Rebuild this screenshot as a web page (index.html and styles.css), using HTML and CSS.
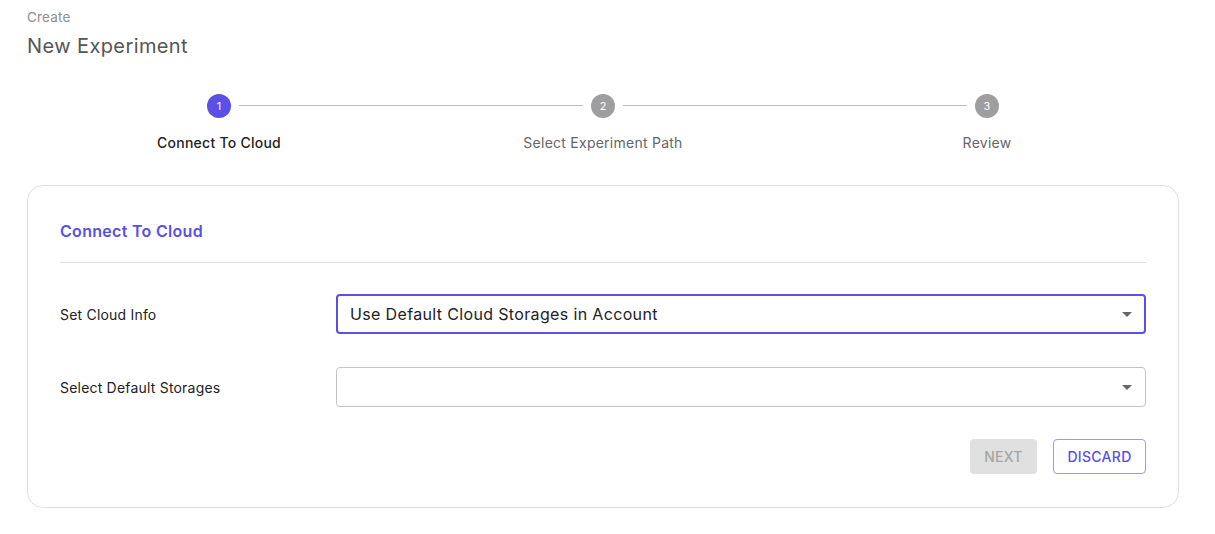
FILE: index.html
```html
<!DOCTYPE html>
<html lang="en">
<head>
<meta charset="utf-8">
<title>New Experiment</title>
<link rel="stylesheet" href="styles.css">
</head>
<body>
<div class="page">
  <header class="head">
    <div class="crumb">Create</div>
    <h1 class="title">New Experiment</h1>
  </header>

  <ol class="stepper">
    <li class="step active">
      <span class="dot">1</span>
      <span class="step-label">Connect To Cloud</span>
    </li>
    <li class="step">
      <span class="line"></span>
      <span class="dot">2</span>
      <span class="step-label">Select Experiment Path</span>
    </li>
    <li class="step">
      <span class="line"></span>
      <span class="dot">3</span>
      <span class="step-label">Review</span>
    </li>
  </ol>

  <section class="card">
    <h2 class="card-title">Connect To Cloud</h2>
    <div class="divider"></div>
    <div class="row">
      <label class="row-label">Set Cloud Info</label>
      <div class="select focused">
        <span class="select-value">Use Default Cloud Storages in Account</span>
        <span class="caret"></span>
      </div>
    </div>
    <div class="row">
      <label class="row-label">Select Default Storages</label>
      <div class="select">
        <span class="select-value"></span>
        <span class="caret"></span>
      </div>
    </div>
    <div class="actions">
      <button class="btn btn-disabled" disabled>NEXT</button>
      <button class="btn btn-outline">DISCARD</button>
    </div>
  </section>
</div>
</body>
</html>
```

FILE: styles.css
```css
* { box-sizing: border-box; }
html, body { margin: 0; padding: 0; background: #fff; }
body {
  font-family: "Inter", "Open Sans", sans-serif;
  color: #222;
}
.page {
  padding: 8px 36px 0 27px;
  width: 1215px;
}
.head { display: flex; flex-direction: column; }
.crumb {
  font-size: 13.5px;
  line-height: 18px;
  color: #8f8f8f;
  letter-spacing: 0.2px;
}
.title {
  margin: 8px 0 0;
  font-size: 20px;
  line-height: 24px;
  font-weight: 400;
  color: #555;
  letter-spacing: 0.4px;
}
.stepper {
  list-style: none;
  margin: 36px 0 0;
  padding: 0;
  display: grid;
  grid-template-columns: repeat(3, 1fr);
}
.step {
  position: relative;
  display: flex;
  flex-direction: column;
  align-items: center;
}
.line {
  position: absolute;
  top: 11px;
  left: calc(-50% + 20px);
  right: calc(50% + 20px);
  border-top: 1px solid #bdbdbd;
}
.dot {
  width: 24px;
  height: 24px;
  border-radius: 50%;
  background: #9e9e9e;
  color: #fff;
  font-size: 11px;
  display: flex;
  align-items: center;
  justify-content: center;
}
.step.active .dot { background: #5a4fe6; }
.step-label {
  margin-top: 16px;
  font-size: 14px;
  line-height: 18px;
  color: #666;
  letter-spacing: 0.25px;
}
.step.active .step-label { color: #222; font-weight: 500; }

.card {
  margin-top: 33px;
  border: 1px solid #e0e0e0;
  border-radius: 16px;
  padding: 34px 32px 32px;
  height: 323px;
}
.card-title {
  margin: 0;
  font-size: 16px;
  line-height: 22px;
  font-weight: 600;
  color: #5a4fe6;
  letter-spacing: 0.3px;
}
.divider {
  margin-top: 20px;
  border-top: 1px solid #e0e0e0;
}
.row {
  display: grid;
  grid-template-columns: 276px 1fr;
  align-items: center;
  margin-top: 31px;
}
.row + .row { margin-top: 33px; }
.row-label {
  font-size: 14px;
  color: #222;
  letter-spacing: 0.2px;
}
.select {
  height: 40px;
  border: 1px solid #c4c4c4;
  border-radius: 4px;
  display: flex;
  align-items: center;
  justify-content: space-between;
  padding: 0 13px 0 13px;
}
.select.focused {
  border: 2px solid #5a4fe6;
  padding: 0 12px 0 12px;
}
.select-value {
  font-size: 16px;
  color: #222;
  letter-spacing: 0.35px;
}
.caret {
  width: 0;
  height: 0;
  border-left: 5px solid transparent;
  border-right: 5px solid transparent;
  border-top: 5px solid #666;
}
.actions {
  display: flex;
  justify-content: flex-end;
  gap: 16px;
  margin-top: 32px;
}
.btn {
  height: 35px;
  border-radius: 4px;
  font-family: inherit;
  font-size: 14px;
  font-weight: 500;
  padding: 0;
  background: #fff;
  letter-spacing: 0.3px;
}
.btn-disabled {
  background: #e0e0e0;
  color: #a6a6a6;
  border: none;
  width: 67px;
}
.btn-outline {
  border: 1px solid #9f98f0;
  color: #5a4fe6;
  width: 93px;
}
```
